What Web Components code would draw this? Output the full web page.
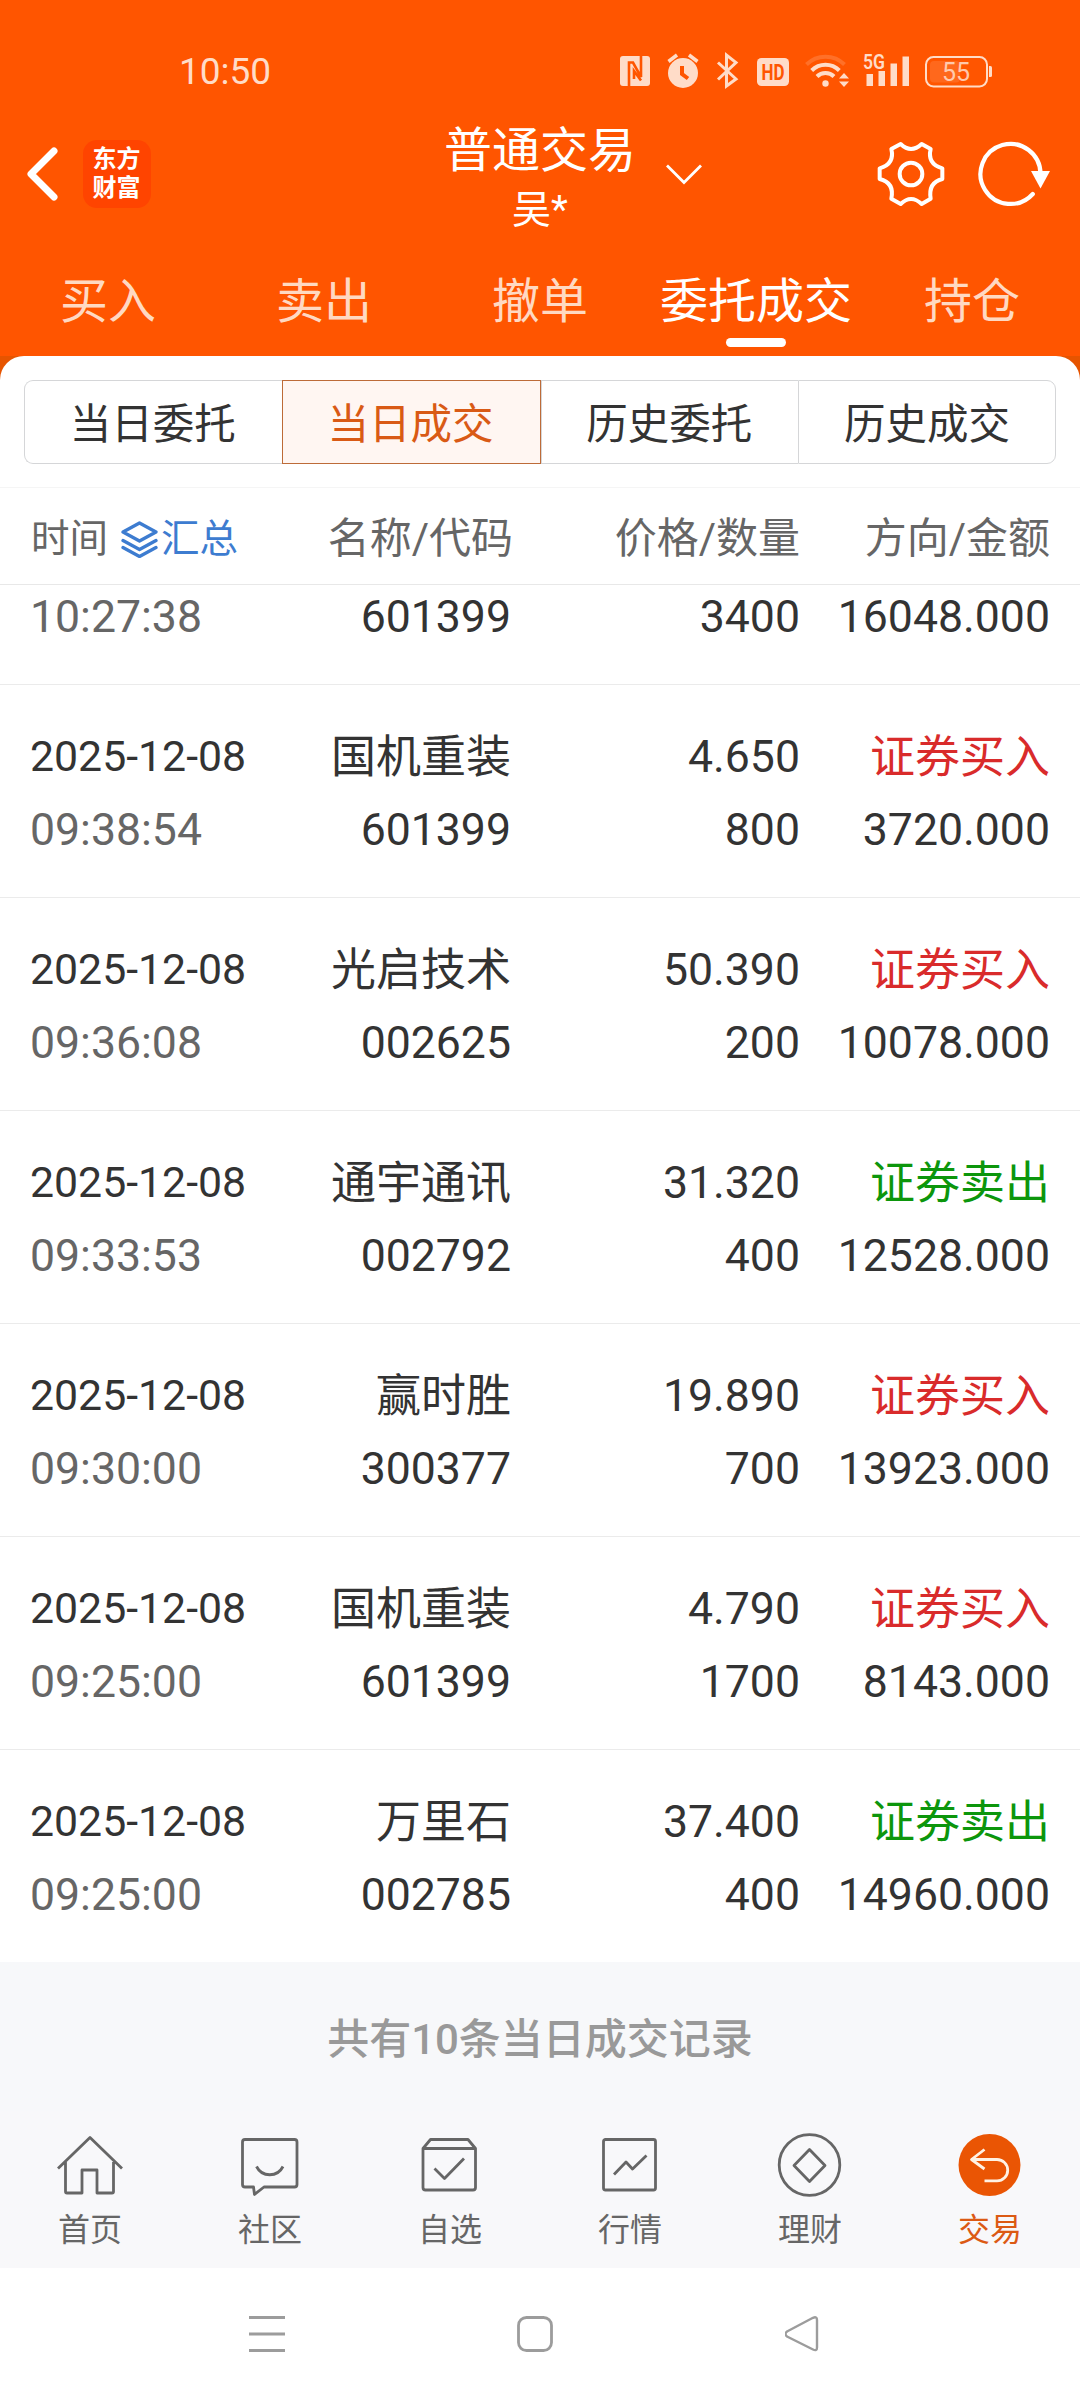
<!DOCTYPE html>
<html lang="zh-CN">
<head>
<meta charset="utf-8">
<title>普通交易</title>
<style>
  body {
    margin: 0;
    width: 1080px;
    background: #fff;
    color: #333;
    font-family: Roboto, "Noto Sans CJK SC", sans-serif;
  }
</style>
</head>
<body>
<trade-app></trade-app>

<script>
const ICONS = {
  home: `<path d="M4 35.500L36 4.500L68 35.500M11.500 29V58.500Q11.500 60 13 60H28V37H43V60H58Q59.500 60 59.500 58.500V29"/>`,
  chat: `<path d="M11 6.500H60.500Q63 6.500 63 9V51.500Q63 54 60.500 54H30L20.500 61.500L19.500 54H11Q8.500 54 8.500 51.500V9Q8.500 6.500 11 6.500Z"/><path d="M22.500 33.500C28 44.500 43.500 44.500 49 33.500"/>`,
  box: `<path d="M9 15.500L16.500 6.500H54L61.500 15.500V54.500Q61.500 57 59 57H11.500Q9 57 9 54.500ZM9 15.500H61.500M20.500 35.500L30.500 45.500L50 25.500"/>`,
  chart: `<rect x="9.500" y="6.500" width="52" height="50.500" rx="2"/><path d="M20 41.500L32 29L38.500 36L52.500 22.500"/>`,
  money: `<circle cx="35.500" cy="32" r="30.300"/><path d="M35.500 16.500L51 32.500L35.500 48.500L20 32.500Z"/>`,
  trade: `<circle cx="35.500" cy="32" r="31" fill="#ea5504" stroke="none"/><path stroke="#fff2e4" d="M30.500 16.500L17.500 26.500L30.500 36M17.500 26.500H43A10.700 10.700 0 0 1 43 47.900H30.500"/>`
};

class StatusBar extends HTMLElement {
  constructor() {
    super();
    this.attachShadow({ mode: 'open' });
    this.shadowRoot.innerHTML = `
    <style>
    :host {
      display: flex;
      justify-content: space-between;
      height: 59px;
      padding: 53px 88px 0 179px;
      color: #ffdcc8;
    }
    .time {
      font-size: 37px;
      line-height: 38px;
    }
    .icons {
      display: flex;
      align-items: flex-start;
    }
    svg {
      display: block;
      overflow: visible;
      fill: currentColor;
    }
    .line {
      fill: none;
      stroke: currentColor;
    }
    .cut {
      fill: none;
      stroke: #ff5500;
    }
    text {
      font-family: Roboto, sans-serif;
    }
    </style>

    <span class="time">10:50</span>
    <div class="icons">
      <svg width="30" height="36" style="margin-right:17px">
        <rect y="3" width="30" height="30" rx="3"/>
        <path class="cut" stroke-width="2.600" d="M9 33V9.500H13L21 24V3M14 26V18L21 27.500"/>
      </svg>
      <svg width="32" height="36" style="margin-right:18px">
        <circle cx="16" cy="20" r="15"/>
        <path class="line" stroke-width="3.500" d="M1.500 8.500L10 2M22 2L30.500 8.500"/>
        <path class="cut" stroke-width="4" d="M15 13V21L21 25.500"/>
      </svg>
      <svg width="21" height="36" style="margin-right:19px">
        <path class="line" stroke-width="3" d="M1 9.500L19 26L9.500 33V2L19 9.500L1 26.500"/>
      </svg>
      <svg width="32" height="36" style="margin-right:16px">
        <rect y="5" width="32" height="28" rx="4.500"/>
        <text x="4.500" y="27" font-size="22" font-weight="700" fill="#ff5500" textLength="23" lengthAdjust="spacingAndGlyphs">HD</text>
      </svg>
      <svg width="44" height="36" style="margin-right:14px">
        <circle cx="20.500" cy="30.500" r="3.200"/>
        <g class="line" stroke-width="4">
          <path opacity=".2" d="M1.500 11.500A27 27 0 0 1 39.500 11.500"/>
          <path d="M6.700 17.500A19.500 19.500 0 0 1 34.300 17.500"/>
          <path d="M12 23.500A12 12 0 0 1 29 23.500"/>
        </g>
        <path d="M34 25.500L39 20L44 25.500ZM34 28.500H44L39 34Z"/>
      </svg>
      <svg width="46" height="36" style="margin-right:16px">
        <text x="0" y="15.500" font-size="20" font-weight="600" textLength="22" lengthAdjust="spacingAndGlyphs">5G</text>
        <path d="M3.500 21h6.500v12h-6.500zM15.500 18h6.500v15h-6.500zM27.500 10.500h6.500v22.500h-6.500zM39.500 3.500h6.500v29.500h-6.500z"/>
      </svg>
      <svg width="67" height="36">
        <rect class="line" stroke-width="2" x="1" y="4" width="61" height="29.500" rx="7.500"/>
        <rect x="5" y="8" width="30" height="21.500" rx="4" opacity=".14"/>
        <path d="M64 13h1.500q1.500 0 1.500 1.500v8q0 1.500-1.500 1.500H64z"/>
        <text x="31" y="27.500" font-size="25" text-anchor="middle" opacity=".85">55</text>
      </svg>
    </div>
    `;
  }
}

class TitleBar extends HTMLElement {
  constructor() {
    super();
    this.attachShadow({ mode: 'open' });
    this.shadowRoot.innerHTML = `
    <style>
    :host {
      display: grid;
      grid-template-columns: 440px 200px 1fr;
      grid-template-rows: 124px;
      align-items: center;
      height: 124px;
      color: #fff;
    }
    svg {
      display: block;
      fill: none;
      stroke: currentColor;
      overflow: visible;
    }
    .left {
      display: flex;
      align-items: center;
      gap: 25px;
      padding-left: 27px;
    }
    .logo {
      display: flex;
      flex-direction: column;
      align-items: center;
      box-sizing: border-box;
      width: 68px;
      height: 68px;
      padding: 5px 1px 0 0;
      border-radius: 14px;
      background: #ff4400;
      font-size: 24px;
      font-weight: 700;
      line-height: 29px;
    }
    .title {
      align-self: start;
      margin-top: 9px;
      text-align: center;
      white-space: nowrap;
      line-height: 60px;
      font-size: 48px;
    }
    .user {
      font-size: 39px;
      line-height: 58px;
    }
    .right {
      display: flex;
      align-items: center;
      padding: 0 30px 0 26px;
    }
    .down {
      margin-right: auto;
    }
    .gear {
      margin-right: 35px;
    }
    </style>

    <div class="left">
      <svg width="31" height="54" stroke-width="7" stroke-linecap="round" stroke-linejoin="round">
        <path d="M27 4L4 27L27 50"/>
      </svg>
      <div class="logo"><span>东方</span><span>财富</span></div>
    </div>
    <div class="title">
      <div><slot></slot></div>
      <div class="user"><slot name="user"></slot></div>
    </div>
    <div class="right">
      <svg class="down" width="36" height="20" stroke-width="2.800"><path d="M1 1.500L18 18.500L35 1.500"/></svg>
      <svg class="gear" width="66" height="66" viewBox="0 0 198 198" stroke-width="12" stroke-linejoin="round">
        <path d="M68 9Q99 39 131 9L158 24Q147 69 193 82V114Q150 125 158 173L131 189Q99 159 68 189L40 173Q50 125 5 114V82Q51 69 40 24Z"/>
        <circle cx="99" cy="99" r="34"/>
      </svg>
      <svg width="71" height="65">
        <path stroke-width="4.200" stroke-linecap="round" d="M61.500 32A30 30 0 1 0 53.800 52"/>
        <path fill="currentColor" stroke="none" d="M52 29H71L61.500 46.500Z"/>
      </svg>
    </div>
    `;
  }
}

class MainTab extends HTMLElement {
  constructor() {
    super();
    this.attachShadow({ mode: 'open' });
    this.shadowRoot.innerHTML = `
    <style>
    :host {
      display: flex;
      flex-direction: column;
      align-items: center;
      gap: 6px;
      width: 216px;
      padding-top: 36px;
      font-size: 48px;
      line-height: 60px;
      color: #ffd9c2;
    }
    :host([active]) {
      color: #fff;
    }
    :host([active])::after {
      content: "";
      width: 60px;
      height: 9px;
      border-radius: 5px;
      background: #fff;
    }
    </style>
    <slot></slot>
    `;
  }
}

class SegmentItem extends HTMLElement {
  constructor() {
    super();
    this.attachShadow({ mode: 'open' });
    this.shadowRoot.innerHTML = `
    <style>
    :host {
      box-sizing: border-box;
      flex: 1;
      height: 84px;
      padding: 3px 1px 0 0;
      border: 1px solid #d5d6d8;
      border-right-width: 0;
      text-align: center;
      font-size: 41.500px;
      line-height: 82px;
    }
    :host(:first-child) {
      border-radius: 9px 0 0 9px;
    }
    :host(:last-child) {
      padding-right: 0;
      border-right-width: 1px;
      border-radius: 0 9px 9px 0;
    }
    :host([active]) {
      border: 1px solid #bd6b38;
      background: #fff6f2;
      color: #d95a15;
    }
    </style>
    <slot></slot>
    `;
  }
}

class TableHead extends HTMLElement {
  constructor() {
    super();
    this.attachShadow({ mode: 'open' });
    this.shadowRoot.innerHTML = `
    <style>
    :host {
      display: grid;
      grid-template-columns: 233px 249px 288px 250px;
      box-sizing: border-box;
      height: 98px;
      padding: 4px 30px 0;
      border-top: 1px solid #f5f5f5;
      border-bottom: 1px solid #e8e8e8;
      color: #666;
      font-size: 42px;
      line-height: 94px;
      text-align: right;
      white-space: nowrap;
    }
    .code {
      margin-right: -1px;
    }
    .time {
      display: flex;
      align-items: center;
      padding-left: 1px;
      font-size: 38.500px;
    }
    .sum {
      display: flex;
      align-items: center;
      gap: 3px;
      margin-left: 13px;
      color: #3d7cd0;
    }
    svg {
      display: block;
      fill: none;
      stroke: currentColor;
      stroke-width: 3.300;
      stroke-linejoin: round;
      stroke-linecap: round;
    }
    </style>

    <div class="time">时间
      <span class="sum">
        <svg width="37" height="37"><path d="M18.500 2L35 11L18.500 20L2 11ZM2 19.500L18.500 28.500L35 19.500M2 26.500L18.500 35.500L35 26.500"/></svg>汇总
      </span>
    </div>
    <span class="code">名称/代码</span>
    <span>价格/数量</span>
    <span>方向/金额</span>
    `;
  }
}

class TradeRow extends HTMLElement {
  constructor() {
    super();
    this.attachShadow({ mode: 'open' });
  }

  connectedCallback() {
    const { date, time, name, code, price, count, side, amount } = this.dataset;
    const first = date ? `
      <span class="date">${date}</span>
      <span class="name">${name}</span>
      <span>${price}</span>
      <span class="${side === '证券买入' ? 'buy' : 'sell'}">${side}</span>` : '';

    this.shadowRoot.innerHTML = `
    <style>
    :host {
      display: grid;
      grid-template-columns: 232px 249px 289px 250px;
      grid-auto-rows: 73px;
      align-content: end;
      box-sizing: border-box;
      height: 213px;
      padding: 0 30px 31px;
      border-bottom: 1px solid #ebebeb;
      font-size: 44.600px;
      line-height: 75px;
      text-align: right;
      white-space: nowrap;
    }
    /* row scrolled half under the table head */
    :host([clipped]) {
      height: 100px;
    }
    :host(:last-of-type) {
      height: 212px;
      border-bottom: 0;
    }
    .date, .time {
      text-align: left;
    }
    .date {
      font-size: 42.800px;
      line-height: 73px;
    }
    .time {
      color: #666;
    }
    .name, .buy, .sell {
      font-size: 45px;
    }
    .buy {
      color: #d92b2b;
    }
    .sell {
      color: #0c960c;
    }
    </style>
    ${first}
    <span class="time">${time}</span>
    <span>${code}</span>
    <span>${count}</span>
    <span>${amount}</span>
    `;
  }
}

class NavItem extends HTMLElement {
  constructor() {
    super();
    this.attachShadow({ mode: 'open' });
  }

  connectedCallback() {
    this.shadowRoot.innerHTML = `
    <style>
    :host {
      display: flex;
      flex-direction: column;
      align-items: center;
      gap: 11px;
      flex: 1;
      padding-top: 22px;
      color: #666;
      font-size: 32px;
      line-height: 44px;
    }
    :host([active]) {
      color: #dc5a14;
    }
    svg {
      display: block;
      fill: none;
      stroke: currentColor;
      stroke-width: 2.800;
      stroke-linejoin: round;
    }
    </style>
    <svg width="72" height="64">${ICONS[this.getAttribute('icon')]}</svg>
    <slot></slot>
    `;
  }
}

class SystemNav extends HTMLElement {
  constructor() {
    super();
    this.attachShadow({ mode: 'open' });
    this.shadowRoot.innerHTML = `
    <style>
    :host {
      display: flex;
      align-items: center;
      gap: 232px;
      height: 132px;
      padding-left: 249px;
      background: #fff;
    }
    svg {
      display: block;
      fill: none;
      stroke: #9c9c9c;
      stroke-width: 2.800;
      stroke-linejoin: round;
    }
    </style>
    <svg width="36" height="36"><path d="M0 1.500H36M0 18H36M0 34.500H36"/></svg>
    <svg width="36" height="36"><rect x="1.500" y="1.500" width="33" height="33" rx="8"/></svg>
    <svg width="36" height="36"><path stroke-width="2.400" d="M28 1.800Q32 0 32 4V31.500Q32 35.500 28 33.500L2 20.500Q-1 18 2 15.500Z"/></svg>
    `;
  }
}

class TradeApp extends HTMLElement {
  constructor() {
    super();
    this.attachShadow({ mode: 'open' });
    this.shadowRoot.innerHTML = `
    <style>
    :host {
      display: flex;
      flex-direction: column;
      height: 2400px;
      overflow: hidden;
    }
    header {
      background: #ff5500;
    }
    .tabs {
      display: flex;
      height: 120px;
    }
    .corners {
      background: linear-gradient(#e65400 24px, #fff 24px);
    }
    .sheet {
      border-radius: 24px 24px 0 0;
      background: #fff;
    }
    .segments {
      display: flex;
      height: 84px;
      padding: 24px 24px 23px;
    }
    .total {
      box-sizing: border-box;
      height: 149px;
      padding-top: 3px;
      background: #f7f8fa;
      color: #999;
      font-size: 42px;
      font-weight: 500;
      line-height: 149px;
      text-align: center;
    }
    nav {
      display: flex;
      height: 157px;
      background: #f8f8fa;
    }
    </style>

    <header>
      <status-bar></status-bar>
      <title-bar>普通交易<span slot="user">吴*</span></title-bar>
      <div class="tabs">
        <main-tab>买入</main-tab>
        <main-tab>卖出</main-tab>
        <main-tab>撤单</main-tab>
        <main-tab active>委托成交</main-tab>
        <main-tab>持仓</main-tab>
      </div>
    </header>
    <div class="corners">
      <div class="sheet">
        <div class="segments">
          <segment-item>当日委托</segment-item>
          <segment-item active>当日成交</segment-item>
          <segment-item>历史委托</segment-item>
          <segment-item>历史成交</segment-item>
        </div>
        <table-head></table-head>
      </div>
    </div>
    <div class="rows">
      <trade-row clipped data-time="10:27:38" data-code="601399" data-count="3400" data-amount="16048.000"></trade-row>
      <trade-row data-date="2025-12-08" data-time="09:38:54" data-name="国机重装" data-code="601399" data-price="4.650" data-count="800" data-side="证券买入" data-amount="3720.000"></trade-row>
      <trade-row data-date="2025-12-08" data-time="09:36:08" data-name="光启技术" data-code="002625" data-price="50.390" data-count="200" data-side="证券买入" data-amount="10078.000"></trade-row>
      <trade-row data-date="2025-12-08" data-time="09:33:53" data-name="通宇通讯" data-code="002792" data-price="31.320" data-count="400" data-side="证券卖出" data-amount="12528.000"></trade-row>
      <trade-row data-date="2025-12-08" data-time="09:30:00" data-name="赢时胜" data-code="300377" data-price="19.890" data-count="700" data-side="证券买入" data-amount="13923.000"></trade-row>
      <trade-row data-date="2025-12-08" data-time="09:25:00" data-name="国机重装" data-code="601399" data-price="4.790" data-count="1700" data-side="证券买入" data-amount="8143.000"></trade-row>
      <trade-row data-date="2025-12-08" data-time="09:25:00" data-name="万里石" data-code="002785" data-price="37.400" data-count="400" data-side="证券卖出" data-amount="14960.000"></trade-row>
    </div>
    <div class="total">共有10条当日成交记录</div>
    <nav>
      <nav-item icon="home">首页</nav-item>
      <nav-item icon="chat">社区</nav-item>
      <nav-item icon="box">自选</nav-item>
      <nav-item icon="chart">行情</nav-item>
      <nav-item icon="money">理财</nav-item>
      <nav-item icon="trade" active>交易</nav-item>
    </nav>
    <system-nav></system-nav>
    `;
  }
}

customElements.define('status-bar', StatusBar);
customElements.define('title-bar', TitleBar);
customElements.define('main-tab', MainTab);
customElements.define('segment-item', SegmentItem);
customElements.define('table-head', TableHead);
customElements.define('trade-row', TradeRow);
customElements.define('nav-item', NavItem);
customElements.define('system-nav', SystemNav);
customElements.define('trade-app', TradeApp);
</script>
</body>
</html>
